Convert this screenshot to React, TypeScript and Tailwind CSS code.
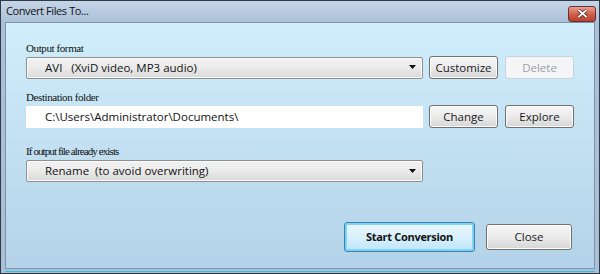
import React from "react";

const serif = { fontFamily: '"Liberation Serif", serif' };

function Caret() {
  return (
    <svg width="8" height="5" viewBox="0 0 8 5" className="shrink-0">
      <path d="M0 0h7L3.5 4z" fill="#111" />
    </svg>
  );
}

function Btn({
  children,
  disabled,
  className = "",
}: {
  children: React.ReactNode;
  disabled?: boolean;
  className?: string;
}) {
  return (
    <div
      className={
        "flex items-center justify-center rounded-[3px] border text-[11.5px] " +
        (disabled
          ? "border-[#c9d3dc] bg-[#f3f5f7] text-[#a0a0a0] "
          : "border-[#707070] bg-gradient-to-b from-[#f6f6f6] via-[#ebebeb] to-[#d6d6d6] text-[#1a1a1a] shadow-[inset_0_0_0_1px_#fcfcfc] ") +
        className
      }
    >
      {children}
    </div>
  );
}

function Select({ value }: { value: string }) {
  return (
    <div className="flex h-[22px] w-[397px] items-center justify-between rounded-[2px] border border-[#8e8f8f] bg-gradient-to-b from-[#f2f2f2] via-[#ebebeb] to-[#d8d8d8] pl-[18px] pr-[5px] text-[11.5px] text-[#111] shadow-[inset_0_0_0_1px_#fbfbfb]">
      <span className="whitespace-pre">{value}</span>
      <Caret />
    </div>
  );
}

function Label({ children, className = "" }: { children: React.ReactNode; className?: string }) {
  return (
    <div className={"text-[11px] leading-[14px] text-[#111] " + className} style={serif}>
      {children}
    </div>
  );
}

export default function App() {
  return (
    <div
      className="flex h-[274px] w-[600px] flex-col border border-[#2e3a46] bg-[#a9c0d8]"
      style={{ fontFamily: '"Open Sans", "Noto Sans", sans-serif' }}
    >
      {/* Title bar */}
      <div className="flex h-[21px] shrink-0 items-center justify-between bg-gradient-to-b from-[#c6d5e7] to-[#abc1d9] pl-[5px] pr-[3px]">
        <span className="text-[11px] tracking-[-0.4px] text-[#111]">Convert Files To...</span>
        <div className="mt-[4px] flex h-[16px] w-[28px] items-center justify-center rounded-[3px] border border-[#6b3030] bg-gradient-to-b from-[#e8a092] via-[#d2604a] to-[#b8412c]">
          <svg width="11" height="9" viewBox="0 0 11 9">
            <path d="M1.5 1l8 7M9.5 1l-8 7" stroke="#3a1a14" strokeWidth="3.2" />
            <path d="M1.5 1l8 7M9.5 1l-8 7" stroke="#fff" strokeWidth="1.8" />
          </svg>
        </div>
      </div>

      {/* Body */}
      <div className="mx-[4px] mb-[2px] flex flex-1 flex-col border border-[#7f93a8] bg-gradient-to-b from-[#d0eefb] to-[#b4d3e8] pl-[20px] pt-[18px]">
        <Label className="tracking-[-0.4px]">Output format</Label>
        <div className="mt-[1px] flex items-center">
          <Select value="AVI   (XviD video, MP3 audio)" />
          <Btn className="ml-[6px] h-[23px] w-[69px]">Customize</Btn>
          <Btn disabled className="ml-[7px] h-[23px] w-[69px]">
            Delete
          </Btn>
        </div>

        <Label className="mt-[11px] tracking-[-0.4px]">Destination folder</Label>
        <div className="mt-[1px] flex items-center">
          <div className="flex h-[22px] w-[397px] items-center bg-white pl-[19px] text-[11.5px] text-[#111]">
            C:\Users\Administrator\Documents\
          </div>
          <Btn className="ml-[6px] h-[23px] w-[69px]">Change</Btn>
          <Btn className="ml-[7px] h-[23px] w-[69px]">Explore</Btn>
        </div>

        <Label className="mt-[16px] tracking-[-0.9px]">If output file already exists</Label>
        <div className="mt-[2px] flex items-center">
          <Select value="Rename  (to avoid overwriting)" />
        </div>

        <div className="mt-[40px] flex items-center pl-[318px]">
          <div className="flex h-[30px] w-[131px] items-center justify-center rounded-[3px] border border-[#3c7fb1] bg-gradient-to-b from-[#eaf6fd] via-[#d9f0fc] to-[#bee6fd] text-[11px] font-bold tracking-[-0.3px] text-[#111] shadow-[inset_0_0_0_2px_#7fd3f5]">
            Start Conversion
          </div>
          <Btn className="ml-[11px] h-[26px] w-[86px]">Close</Btn>
        </div>
      </div>
      <div className="mx-[4px] mb-[1px] h-[1px] bg-[#2fc0e0]" />
    </div>
  );
}
